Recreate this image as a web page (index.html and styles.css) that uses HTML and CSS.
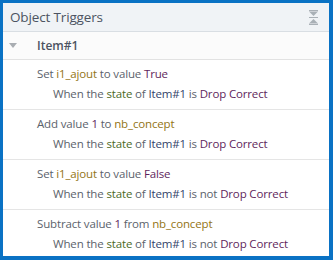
FILE: index.html
```html
<!DOCTYPE html>
<html lang="en">
<head>
    <meta charset="UTF-8">
    <title>Object Triggers</title>
    <link rel="stylesheet" href="styles.css">
</head>
<body>
    <div class="panel">
        <div class="panel-header">
            <span class="panel-title">Object Triggers</span>
            <svg class="collapse-icon" width="9" height="15" viewBox="0 0 9 15">
                <rect x="0" y="0" width="9" height="1.5" fill="#a9b0b6"/>
                <polygon points="0.5,2 8.5,2 4.5,6" fill="#a9b0b6"/>
                <rect x="0" y="7" width="9" height="1" fill="#a9b0b6"/>
                <polygon points="0.5,13 8.5,13 4.5,9" fill="#a9b0b6"/>
                <rect x="0" y="13.5" width="9" height="1.5" fill="#a9b0b6"/>
            </svg>
        </div>
        <div class="item-row">
            <div class="caret-box">
                <svg width="8" height="5" viewBox="0 0 8 5"><polygon points="0,0 8,0 4,5" fill="#a9adb2"/></svg>
            </div>
            <div class="item-name">Item#1</div>
        </div>
        <div class="trigger">
            <div class="action">Set <span class="var">i1_ajout</span> to value <span class="val">True</span></div>
            <div class="condition">When the <span class="prop">state</span> of <span class="obj">Item#1</span> is <span class="val">Drop Correct</span></div>
        </div>
        <div class="trigger">
            <div class="action">Add value <span class="val">1</span> to <span class="var">nb_concept</span></div>
            <div class="condition">When the <span class="prop">state</span> of <span class="obj">Item#1</span> is <span class="val">Drop Correct</span></div>
        </div>
        <div class="trigger">
            <div class="action">Set <span class="var">i1_ajout</span> to value <span class="val">False</span></div>
            <div class="condition">When the <span class="prop">state</span> of <span class="obj">Item#1</span> is not <span class="val">Drop Correct</span></div>
        </div>
        <div class="trigger">
            <div class="action">Subtract value <span class="val">1</span> from <span class="var">nb_concept</span></div>
            <div class="condition">When the <span class="prop">state</span> of <span class="obj">Item#1</span> is not <span class="val">Drop Correct</span></div>
        </div>
    </div>
</body>
</html>
```

FILE: styles.css
```css
/* General */
body {
    margin: 0;
    font-family: 'Open Sans', sans-serif;
    font-size: 11.5px;
    letter-spacing: -0.15px;
    color: #5b626b;
}

/* Panel frame */
.panel {
    height: 260px;
    box-sizing: border-box;
    border-style: solid;
    border-color: #0a72c4;
    border-width: 3px 4px 4px 3px;
    background: #fff;
    overflow: hidden;
}

/* Header */
.panel-header {
    height: 28px;
    display: flex;
    align-items: center;
    justify-content: space-between;
    padding: 0 11px 0 7px;
    background: #f0f3f6;
    border-bottom: 1px solid #d9dee3;
}

.panel-title {
    font-size: 13.5px;
    color: #4c5361;
}

.collapse-icon {
    display: block;
}

/* Item row */
.item-row {
    height: 27px;
    display: grid;
    grid-template-columns: 28px 1fr;
    align-items: center;
    padding-left: 6px;
    background: #fbfbfb;
    border-bottom: 1px solid #e2e2e2;
}

.caret-box svg {
    display: block;
}

.item-name {
    font-size: 12px;
    font-weight: 600;
    letter-spacing: 0;
    color: #4c5361;
}

/* Trigger entries */
.trigger {
    padding: 4px 0 5px 34px;
    border-bottom: 1px solid #e5e5e5;
    line-height: 20px;
}

.condition {
    padding-left: 16px;
}

.var {
    color: #937414;
}

.val {
    color: #5f1f5c;
}

.prop {
    color: #4b6a1e;
}

.obj {
    color: #33446a;
}
```
